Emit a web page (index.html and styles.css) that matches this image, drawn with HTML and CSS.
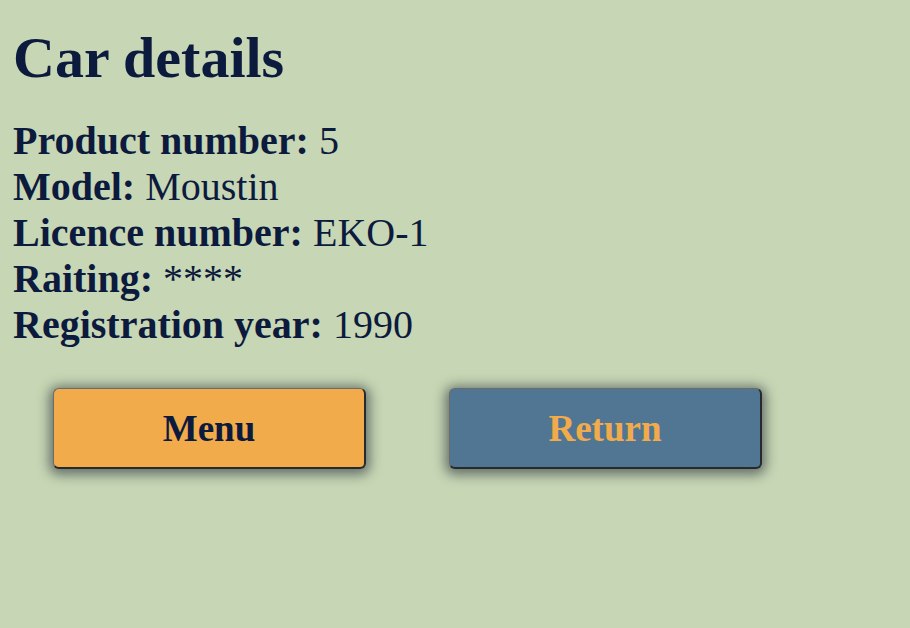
FILE: index.html
```html
<!DOCTYPE html>
<html>
<head>
<meta charset="utf-8">
<link rel="stylesheet" href="styles.css">
</head>
<body>
<main class="page">
  <h1 class="title">Car details</h1>
  <div class="details">
    <div class="row"><b>Product number:</b> 5</div>
    <div class="row"><b>Model:</b> Moustin</div>
    <div class="row"><b>Licence number:</b> EKO-1</div>
    <div class="row"><b>Raiting:</b> ****</div>
    <div class="row"><b>Registration year:</b> 1990</div>
  </div>
  <div class="actions">
    <button class="btn btn-menu">Menu</button>
    <button class="btn btn-return">Return</button>
  </div>
</main>
</body>
</html>
```

FILE: styles.css
```css
html, body {
  margin: 0;
  padding: 0;
  background: #c7d6b4;
  min-height: 100%;
}
body {
  font-family: "Liberation Serif", "Times New Roman", serif;
  color: #0c1a3d;
}
.page {
  padding: 26px 13px 60px 13px;
}
.title {
  margin: 0;
  font-size: 58px;
  font-weight: bold;
  line-height: 63px;
}
.details {
  margin-top: 29px;
  font-size: 40px;
  line-height: 46px;
}
.actions {
  display: flex;
  gap: 83px;
  margin-top: 40px;
  padding-left: 40px;
}
.btn {
  width: 313px;
  height: 81px;
  border-radius: 6px;
  border-style: solid;
  border-width: 1px 2px 2px 1px;
  border-color: #6b6b6b #262a2c #262a2c #6b6b6b;
  box-shadow: 0 2px 12px 4px rgba(40, 50, 60, 0.6);
  font-family: "Liberation Serif", "Times New Roman", serif;
  font-weight: bold;
  font-size: 37px;
  padding: 0;
  display: flex;
  align-items: center;
  justify-content: center;
}
.btn-menu {
  background: #f2ab4b;
  color: #0c1a3d;
}
.btn-return {
  background: #517694;
  color: #f2ab4b;
}
```
